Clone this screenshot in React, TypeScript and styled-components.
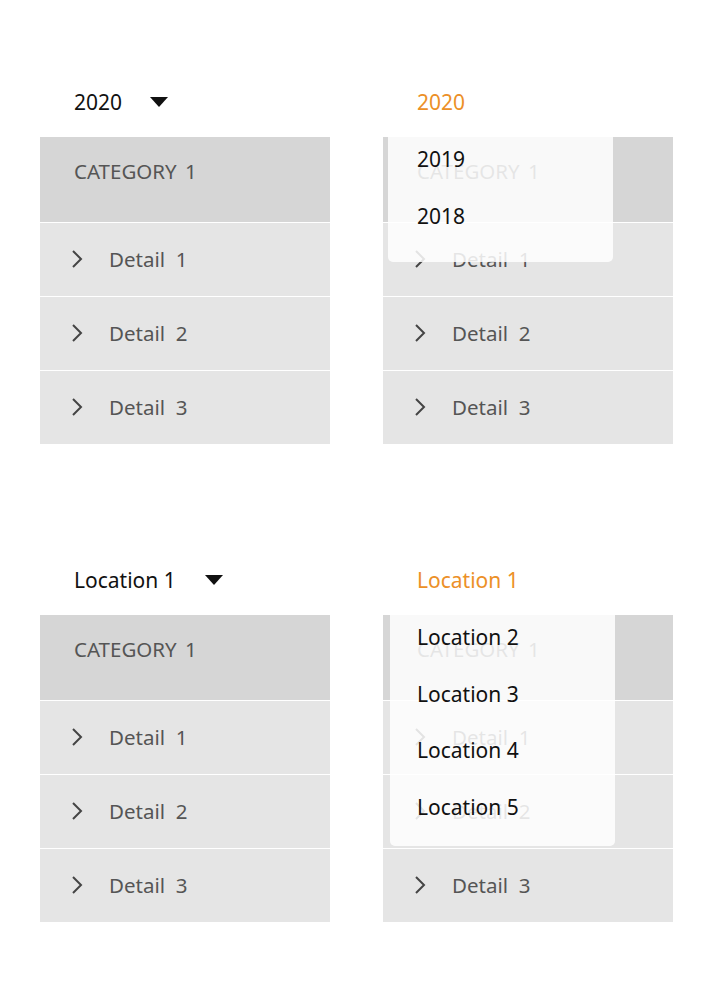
import React from "react";
import styled, { createGlobalStyle } from "styled-components";

const Global = createGlobalStyle`
  html, body { margin: 0; padding: 0; background: #fff; }
  body { font-family: "Noto Sans", "Noto Sans CJK KR", sans-serif; }
`;

const Page = styled.div`
  display: flex;
  flex-direction: column;
  gap: 111px;
  padding: 77px 0 0 40px;
`;

const Row = styled.div`
  display: grid;
  grid-template-columns: 290px 290px;
  column-gap: 53px;
`;

const Column = styled.div`
  position: relative;
  display: flex;
  flex-direction: column;
  gap: 10px;
`;

const Header = styled.div<{ $open?: boolean }>`
  height: 50px;
  display: flex;
  align-items: center;
  padding-left: 34px;
  font-size: 21px;
  color: ${(p) => (p.$open ? "#ec9027" : "#111")};
`;

const Caret = styled.span<{ $gap: number }>`
  display: inline-block;
  width: 0;
  height: 0;
  margin-left: ${(p) => p.$gap}px;
  border-left: 9.5px solid transparent;
  border-right: 9.5px solid transparent;
  border-top: 10px solid #111;
`;

const Panel = styled.div`
  display: flex;
  flex-direction: column;
  gap: 1px;
`;

const CategoryRow = styled.div`
  height: 85px;
  background: #d6d6d6;
  display: flex;
  align-items: center;
  padding-left: 34px;
  padding-bottom: 17px;
  box-sizing: border-box;
  font-size: 20.5px;
  color: #555;
  word-spacing: 3px;
`;

const DetailRow = styled.div`
  height: 73px;
  background: #e5e5e5;
  display: flex;
  align-items: center;
  padding-left: 31px;
  padding-bottom: 1px;
  box-sizing: border-box;
  font-size: 20.5px;
  color: #555;
  white-space: pre;
`;

const Chevron = styled.svg`
  width: 12px;
  height: 20px;
  margin-right: 26px;
  flex: none;
`;

const Dropdown = styled.div<{ $left: number; $padBottom: number }>`
  position: absolute;
  top: 60px;
  left: ${(p) => p.$left}px;
  width: 225px;
  background: rgba(255, 255, 255, 0.85);
  border-radius: 0 0 5px 5px;
  display: flex;
  flex-direction: column;
  gap: 12.5px;
  padding-bottom: ${(p) => p.$padBottom}px;
`;

const Option = styled.div<{ $pad: number }>`
  height: 44px;
  display: flex;
  align-items: center;
  padding-left: ${(p) => p.$pad}px;
  font-size: 21px;
  color: #111;
`;

const ChevronIcon = () => (
  <Chevron viewBox="0 0 12 20">
    <path d="M2 2 L10 10 L2 18" fill="none" stroke="#444" strokeWidth="2" />
  </Chevron>
);

const Block = () => (
  <Panel>
    <CategoryRow>CATEGORY 1</CategoryRow>
    {[1, 2, 3].map((n) => (
      <DetailRow key={n}>
        <ChevronIcon />
        {`Detail  ${n}`}
      </DetailRow>
    ))}
  </Panel>
);

const Section = ({
  value,
  options,
  caretGap,
  dropLeft,
  padBottom,
}: {
  value: string;
  options: string[];
  caretGap: number;
  dropLeft: number;
  padBottom: number;
}) => (
  <Row>
    <Column>
      <Header>
        {value}
        <Caret $gap={caretGap} />
      </Header>
      <Block />
    </Column>
    <Column>
      <Header $open>{value}</Header>
      <Block />
      <Dropdown $left={dropLeft} $padBottom={padBottom}>
        {options.map((o) => (
          <Option key={o} $pad={34 - dropLeft}>
            {o}
          </Option>
        ))}
      </Dropdown>
    </Column>
  </Row>
);

export default function App() {
  return (
    <>
      <Global />
      <Page>
        <Section value="2020" options={["2019", "2018"]} caretGap={28} dropLeft={5} padBottom={24} />
        <Section
          value="Location 1"
          options={["Location 2", "Location 3", "Location 4", "Location 5"]}
          caretGap={29}
          dropLeft={7}
          padBottom={17}
        />
      </Page>
    </>
  );
}
